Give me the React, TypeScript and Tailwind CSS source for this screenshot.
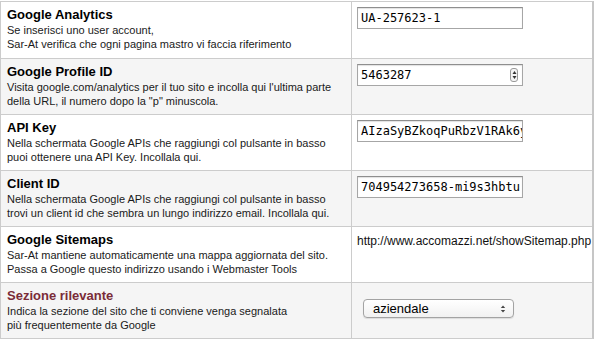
import React from "react";

const sans = { fontFamily: '"Liberation Sans", Arial, sans-serif' };

type Row = {
  title: string;
  lines: string[];
  red?: boolean;
  field: React.ReactNode;
};

const TextField = ({ value, spin }: { value: string; spin?: boolean }) => (
  <div className="relative flex h-[22px] w-[166px] items-center overflow-hidden border border-[#a6a6a6] border-t-[#8e8e8e] bg-white pl-[3px] font-['DejaVu_Sans_Mono',monospace] text-[12px] text-black shadow-[inset_0_1px_1px_rgba(0,0,0,0.12)]">
    <span className="whitespace-nowrap">{value}</span>
    {spin && (
      <span className="absolute right-[4px] top-[3px] flex h-[14px] w-[8px] flex-col items-center justify-center rounded-[3px] border border-[#9a9a9a] bg-[#f4f4f4]">
        <svg width="5" height="10" viewBox="0 0 5 10">
          <path d="M2.5 1 L4.5 4 L0.5 4 Z" fill="#333" />
          <path d="M2.5 9 L4.5 6 L0.5 6 Z" fill="#333" />
        </svg>
      </span>
    )}
  </div>
);

const rows: Row[] = [
  {
    title: "Google Analytics",
    lines: ["Se inserisci uno user account,", "Sar-At verifica che ogni pagina mastro vi faccia riferimento"],
    field: <TextField value="UA-257623-1" />,
  },
  {
    title: "Google Profile ID",
    lines: [
      "Visita google.com/analytics per il tuo sito e incolla qui l'ultima parte",
      'della URL, il numero dopo la "p" minuscola.',
    ],
    field: <TextField value="5463287" spin />,
  },
  {
    title: "API Key",
    lines: ["Nella schermata Google APIs che raggiungi col pulsante in basso", "puoi ottenere una API Key. Incollala qui."],
    field: <TextField value="AIzaSyBZkoqPuRbzV1RAk6y" />,
  },
  {
    title: "Client ID",
    lines: [
      "Nella schermata Google APIs che raggiungi col pulsante in basso",
      "trovi un client id che sembra un lungo indirizzo email. Incollala qui.",
    ],
    field: <TextField value="704954273658-mi9s3hbtu" />,
  },
  {
    title: "Google Sitemaps",
    lines: [
      "Sar-At mantiene automaticamente una mappa aggiornata del sito.",
      "Passa a Google questo indirizzo usando i Webmaster Tools",
    ],
    field: (
      <div className="whitespace-nowrap pt-[1px] text-[12px] leading-[16px] text-[#111]">
        http://www.accomazzi.net/showSitemap.php
      </div>
    ),
  },
  {
    title: "Sezione rilevante",
    red: true,
    lines: ["Indica la sezione del sito che ti conviene venga segnalata", "più frequentemente da Google"],
    field: (
      <div className="ml-[6px] mt-[11px] flex h-[19px] w-[151px] items-center justify-between rounded-[4px] border border-[#a3a3a3] bg-gradient-to-b from-white to-[#f1f1f1] pl-[9px] pr-[7px] text-[13px] text-black shadow-[0_1px_1px_rgba(0,0,0,0.1)]">
        <span>aziendale</span>
        <svg width="6" height="10" viewBox="0 0 6 10">
          <path d="M3 1.5 L5.2 4 L0.8 4 Z" fill="#444" />
          <path d="M3 8.5 L5.2 6 L0.8 6 Z" fill="#444" />
        </svg>
      </div>
    ),
  },
];

export default function App() {
  return (
    <div className="h-[340px] w-[594px] overflow-hidden bg-white pt-px" style={sans}>
      <div className="border-l border-r-2 border-t border-b border-[#cccccc] border-r-[#c6c6c6]">
        {rows.map((r, i) => (
          <div
            key={r.title}
            className={`flex h-[56px] ${i > 0 ? "border-t border-[#cccccc]" : ""} ${
              i % 2 === 1 ? "bg-[#f5f5f5]" : "bg-white"
            }`}
          >
            <div className="w-[351px] shrink-0 border-r border-[#cccccc] pl-[6px] pt-[5px]">
              <div className={`text-[13px] font-bold leading-[16px] ${r.red ? "text-[#7a2c38]" : "text-black"}`}>
                {r.title}
              </div>
              {r.lines.map((l) => (
                <div key={l} className="whitespace-nowrap text-[11px] leading-[14px] text-[#1a1a1a]">
                  {l}
                </div>
              ))}
            </div>
            <div className="min-w-0 flex-1 overflow-hidden pl-[5px] pt-[5px]">{r.field}</div>
          </div>
        ))}
      </div>
    </div>
  );
}
